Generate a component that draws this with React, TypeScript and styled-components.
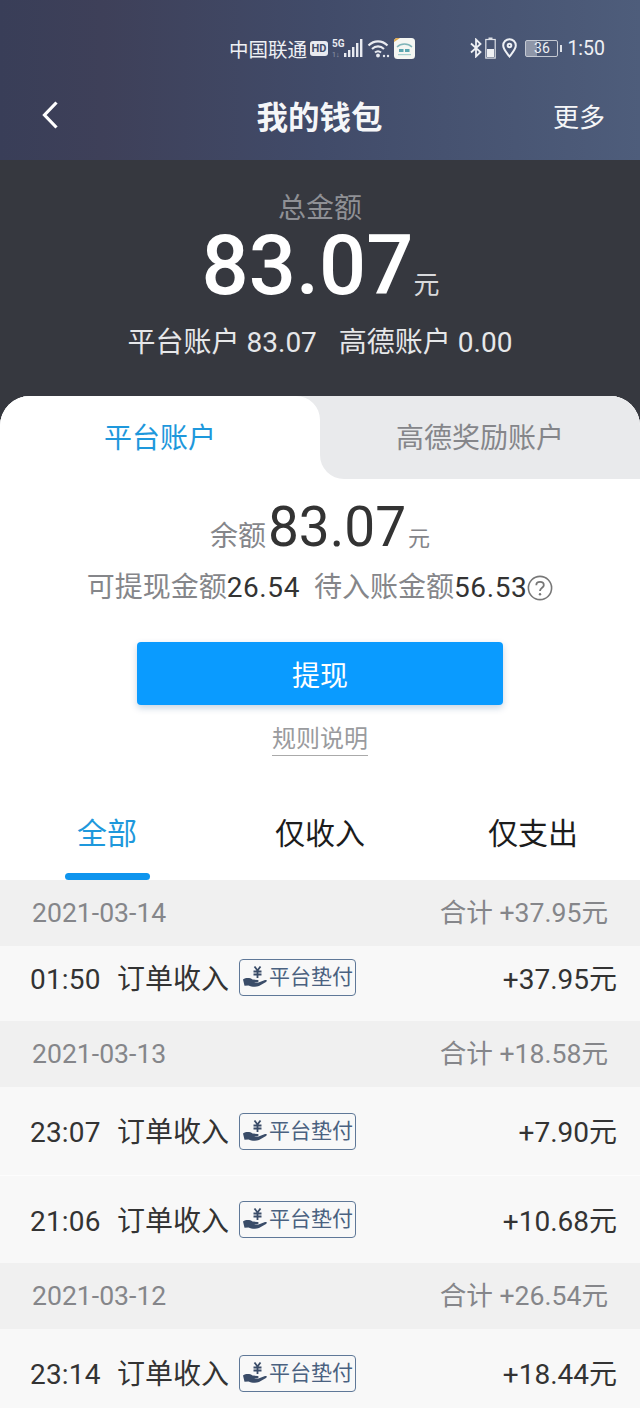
import React from "react";
import styled, { createGlobalStyle } from "styled-components";

const GlobalStyle = createGlobalStyle`
  html, body {
    margin: 0;
    padding: 0;
    background: #f8f8f8;
  }
  body {
    font-family: Roboto, "Noto Sans CJK SC", sans-serif;
  }
`;

const Page = styled.div`
  width: 640px;
  height: 1408px;
  overflow: hidden;
  display: flex;
  flex-direction: column;
`;

const Header = styled.header`
  height: 160px;
  flex-shrink: 0;
  box-sizing: border-box;
  background: linear-gradient(90deg, #393e58 0%, #3e4059 16%, #414b69 50%, #4e5d7b 100%);
  display: flex;
  flex-direction: column;
  color: #fff;
`;

const StatusBar = styled.div`
  height: 36px;
  margin-top: 30px;
  box-sizing: border-box;
  padding: 0 35px 0 229px;
  display: flex;
  align-items: center;
  justify-content: space-between;
  font-size: 19.5px;
  color: #eef0f4;
`;

const StatusGroup = styled.div`
  display: flex;
  align-items: center;
  gap: 3px;
`;

const HdBadge = styled.span`
  width: 18px;
  height: 15px;
  border-radius: 3px;
  background: #e8eaf0;
  color: #414c66;
  font-size: 11px;
  font-weight: 700;
  line-height: 15px;
  text-align: center;
`;

const BatteryBox = styled.span`
  width: 31px;
  height: 15px;
  margin-left: 5px;
  border: 1px solid #c4c9d3;
  border-radius: 2px;
  background: linear-gradient(90deg, #8e96a8 36%, transparent 36%);
  font-size: 14px;
  line-height: 15px;
  text-align: center;
  position: relative;

  &::after {
    content: "";
    position: absolute;
    right: -5px;
    top: 4px;
    width: 2px;
    height: 7px;
    background: #dfe2e8;
  }
`;

const Clock = styled.span`
  margin-left: 6px;
  font-size: 19.5px;
`;

const NavBar = styled.div`
  flex: 1;
  padding: 4px 35px 0 41px;
  display: flex;
  align-items: center;
  justify-content: space-between;
`;

const NavTitle = styled.h1`
  margin: 0 0 0 -5px;
  font-size: 31.5px;
  font-weight: 700;
  color: #f5f6f8;
`;

const NavAction = styled.span`
  font-size: 26px;
  color: #f5f6f8;
`;

const BackSlot = styled.span`
  width: 50px;
  display: flex;
`;

const Summary = styled.section`
  height: 266px;
  flex-shrink: 0;
  background: #36383f;
  display: flex;
  flex-direction: column;
  align-items: center;
  box-sizing: border-box;
  padding-top: 31px;
  color: #fff;
`;

const SummaryLabel = styled.div`
  font-size: 28px;
  line-height: 36px;
  color: #8f9095;
`;

const SummaryAmount = styled.div`
  display: flex;
  align-items: baseline;
  height: 68px;
  line-height: 68px;
  margin-top: 5px;
  padding-left: 1px;
`;

const SummaryValue = styled.span`
  font-size: 83px;
  font-weight: 500;
`;

const SummaryUnit = styled.span`
  font-size: 26px;
  color: #d8d9dc;
`;

const SummaryAccounts = styled.div`
  margin-top: 25px;
  display: flex;
  gap: 22px;
  font-size: 28px;
  line-height: 36px;
  color: #e6e7e9;
`;

const Sheet = styled.section`
  flex-shrink: 0;
  background: #fff;
  border-radius: 30px 30px 0 0;
  margin-top: -30px;
  overflow: hidden;
`;

const TabRow = styled.div`
  display: grid;
  grid-template-columns: 1fr 1fr;
  height: 83px;
`;

const TabCell = styled.div<{ $behind: string }>`
  background: ${({ $behind }) => $behind};
`;

const TabFace = styled.div<{ $active?: boolean }>`
  height: 100%;
  background: ${({ $active }) => ($active ? "#fff" : "#e9eaec")};
  color: ${({ $active }) => ($active ? "#1e98dc" : "#85868a")};
  border-radius: ${({ $active }) => ($active ? "0 24px 0 0" : "0 0 0 24px")};
  font-size: 28px;
  display: flex;
  justify-content: center;
  padding-top: 24px;
  box-sizing: border-box;
  line-height: 38px;
`;

const Balance = styled.div`
  display: flex;
  flex-direction: column;
  align-items: center;
  height: 316px;
  padding-top: 16px;
  box-sizing: border-box;
`;

const BalanceLine = styled.div`
  display: flex;
  align-items: baseline;
  height: 64px;
  line-height: 64px;
  color: #85868a;
  font-size: 28px;
`;

const BalanceValue = styled.span`
  font-size: 55px;
  color: #333;
  margin-left: 2px;
`;

const BalanceUnit = styled.span`
  font-size: 22px;
  margin-left: 2px;
`;

const Available = styled.div`
  margin-top: 10px;
  display: flex;
  align-items: center;
  font-size: 28px;
  line-height: 38px;
  color: #85868a;
`;

const Figure = styled.span<{ $gap?: boolean }>`
  color: #333;
  letter-spacing: 0.6px;
  margin-right: ${({ $gap }) => ($gap ? "14px" : "0")};
`;

const WithdrawButton = styled.button`
  margin-top: 35px;
  width: 366px;
  height: 63px;
  border: none;
  border-radius: 4px;
  background: #0a9bff;
  color: #fff;
  font: inherit;
  font-size: 28px;
  box-shadow: 0 3px 7px rgba(0, 60, 120, 0.22);
`;

const RulesLink = styled.a`
  margin-top: 20px;
  font-size: 24px;
  line-height: 28px;
  padding-bottom: 2px;
  color: #9a9b9e;
  border-bottom: 1px solid #aaa;
`;

const FilterRow = styled.nav`
  height: 85px;
  display: grid;
  grid-template-columns: 214px 212px 214px;
  background: #fff;
`;

const Filter = styled.div<{ $active?: boolean }>`
  position: relative;
  text-align: center;
  font-size: 30px;
  line-height: 40px;
  padding-top: 19px;
  color: ${({ $active }) => ($active ? "#1e98dc" : "#1c1c1c")};

  ${({ $active }) =>
    $active &&
    `&::after {
      content: "";
      position: absolute;
      left: 65px;
      bottom: 0;
      width: 85px;
      height: 7px;
      border-radius: 4px;
      background: #0f95ee;
    }`}
`;

const GroupHeader = styled.div`
  height: 66px;
  box-sizing: border-box;
  padding: 17px 32px 0;
  display: flex;
  align-items: baseline;
  justify-content: space-between;
  background: #f0f0f0;
  color: #85868a;
  font-size: 26.6px;
  line-height: 32px;
`;

const Row = styled.div<{ $height: number; $first?: boolean }>`
  height: ${({ $height }) => $height}px;
  box-sizing: border-box;
  padding: 4px 23px ${({ $first }) => ($first ? "12px" : "0")} 30px;
  display: flex;
  align-items: baseline;
  align-content: center;
  flex-wrap: wrap;
  background: #f8f8f8;
  color: #333;
  font-size: 28px;
  line-height: 36px;

  & + & {
    border-top: 1px solid #fdfdfd;
  }
`;

const RowTime = styled.span`
  width: 87px;
  letter-spacing: 0.2px;
`;

const RowTitle = styled.span`
  width: 122px;
`;

const Tag = styled.span`
  width: 117px;
  height: 37px;
  margin-top: -4px;
  box-sizing: border-box;
  border: 1px solid #5f7898;
  border-radius: 4px;
  display: flex;
  align-items: center;
  gap: 1px;
  padding-left: 2px;
  color: #4a6180;
  font-size: 21px;
  line-height: 35px;
  white-space: nowrap;
  align-self: center;
`;

const RowAmount = styled.span`
  margin-left: auto;
`;

const BackIcon = () => (
  <svg width="18" height="30" viewBox="0 0 18 30" fill="none">
    <path d="M15.5 2.5 L3.5 15 L15.5 27.5" stroke="#fff" strokeWidth="3.2" />
  </svg>
);

const SignalIcon = () => (
  <svg width="33" height="20" viewBox="0 0 33 20" fill="#e8eaf0">
    <text x="1" y="9" fontSize="10" fontWeight="700" fontFamily="Roboto">5G</text>
    <text x="1" y="19" fontSize="7" opacity="0.45" fontFamily="Roboto">1↓</text>
    <rect x="13" y="15" width="2.4" height="4" />
    <rect x="17" y="12" width="2.4" height="7" />
    <rect x="21" y="9" width="2.4" height="10" />
    <rect x="25" y="5" width="2.4" height="14" />
    <rect x="29" y="1" width="2.4" height="18" />
  </svg>
);

const WifiIcon = () => (
  <svg width="24" height="20" viewBox="0 0 24 20" fill="none" stroke="#e8eaf0" strokeWidth="2.1">
    <path d="M1.5 7.5 C7 2 15 2 20.5 7.5" />
    <path d="M5 11 C8.5 7.5 13.5 7.5 17 11" />
    <path d="M8 14.5 C10 12.8 12 12.8 14 14.5" />
    <circle cx="11" cy="17.5" r="1.9" fill="#e8eaf0" stroke="none" />
    <circle cx="17" cy="18" r="1.2" fill="#e8eaf0" stroke="none" />
    <circle cx="21" cy="18" r="1.2" fill="#e8eaf0" stroke="none" />
  </svg>
);

const AppIcon = () => (
  <svg width="21" height="21" viewBox="0 0 21 21">
    <rect width="21" height="21" rx="3.5" fill="#f4f6f2" />
    <path d="M0 4 V3.5 A3.5 3.5 0 0 1 3.5 0 H6 Z" fill="#e0a84a" />
    <path d="M3 9 C7 5 14 5 18 9" fill="none" stroke="#7fb4b8" strokeWidth="1.4" />
    <rect x="5" y="11" width="4.5" height="3" fill="#5aa6b0" />
    <rect x="11" y="11" width="4.5" height="3" fill="#5aa6b0" />
    <rect x="4" y="16" width="13" height="1.2" fill="#a6d0cf" />
  </svg>
);

const BluetoothIcon = () => (
  <svg width="12" height="20" viewBox="0 0 12 20" fill="none" stroke="#eef0f4" strokeWidth="1.8">
    <path d="M1 5.5 L10.5 14 L6 18.5 V1.5 L10.5 6 L1 14.5" />
  </svg>
);

const PhoneBatteryIcon = () => (
  <svg width="11" height="22" viewBox="0 0 11 22" fill="none">
    <rect x="3.5" y="0.5" width="4" height="2" fill="#dfe2e8" />
    <rect x="0.8" y="2.5" width="9.4" height="18.6" stroke="#dfe2e8" strokeWidth="1.2" />
    <rect x="2" y="12" width="7" height="8" fill="#eef0f4" />
  </svg>
);

const PinSvg = styled.svg`
  margin-left: 3px;
`;

const PinIcon = () => (
  <PinSvg width="15" height="20" viewBox="0 0 15 20" fill="none" stroke="#eef0f4" strokeWidth="2">
    <path d="M7.5 18.5 C4 14 1.2 11 1.2 7.5 A6.3 6.3 0 0 1 13.8 7.5 C13.8 11 11 14 7.5 18.5 Z" />
    <circle cx="7.5" cy="7.5" r="1.8" />
  </PinSvg>
);

const HelpIcon = () => (
  <svg width="26" height="26" viewBox="0 0 26 26" fill="none" stroke="#777">
    <circle cx="13" cy="13" r="11.6" strokeWidth="1.6" />
    <path d="M9.3 10.2 C9.3 5.8 16.8 5.8 16.8 10.2 C16.8 12.8 13 12.8 13 16" strokeWidth="1.8" />
    <circle cx="13" cy="19.2" r="1.2" fill="#777" stroke="none" />
  </svg>
);

const HandCoinIcon = () => (
  <svg width="26" height="25" viewBox="0 0 26 25" fill="#3a4c68">
    <path d="M1 14.5 C4 12.5 8 12.8 10.5 14.5 L15.5 15 C17 15.2 17 16.8 15.5 17 L11.5 17.4 L16.5 17.6 L23 15 C24.8 14.6 25.6 16 24 17 L17 21 C13 22.6 9 21.4 6.5 20.4 L2.5 20.8 Z" />
    <path d="M12.5 1.5 L15.5 5.5 L18.5 1.5 M11.5 6.5 H19.5 M11.5 9.5 H19.5 M15.5 5.5 V13" fill="none" stroke="#3a4c68" strokeWidth="1.8" />
  </svg>
);

type Entry = { time: string; amount: string; height: number; first?: boolean };
type Group = { date: string; total: string; entries: Entry[] };

const groups: Group[] = [
  {
    date: "2021-03-14",
    total: "合计 +37.95元",
    entries: [{ time: "01:50", amount: "+37.95元", height: 75, first: true }],
  },
  {
    date: "2021-03-13",
    total: "合计 +18.58元",
    entries: [
      { time: "23:07", amount: "+7.90元", height: 88 },
      { time: "21:06", amount: "+10.68元", height: 88 },
    ],
  },
  {
    date: "2021-03-12",
    total: "合计 +26.54元",
    entries: [{ time: "23:14", amount: "+18.44元", height: 88 }],
  },
];

export default function App() {
  return (
    <Page>
      <GlobalStyle />
      <Header>
        <StatusBar>
          <StatusGroup>
            <span>中国联通</span>
            <HdBadge>HD</HdBadge>
            <SignalIcon />
            <WifiIcon />
            <AppIcon />
          </StatusGroup>
          <StatusGroup>
            <BluetoothIcon />
            <PhoneBatteryIcon />
            <PinIcon />
            <BatteryBox>36</BatteryBox>
            <Clock>1:50</Clock>
          </StatusGroup>
        </StatusBar>
        <NavBar>
          <BackSlot>
            <BackIcon />
          </BackSlot>
          <NavTitle>我的钱包</NavTitle>
          <NavAction>更多</NavAction>
        </NavBar>
      </Header>

      <Summary>
        <SummaryLabel>总金额</SummaryLabel>
        <SummaryAmount>
          <SummaryValue>83.07</SummaryValue>
          <SummaryUnit>元</SummaryUnit>
        </SummaryAmount>
        <SummaryAccounts>
          <span>平台账户 83.07</span>
          <span>高德账户 0.00</span>
        </SummaryAccounts>
      </Summary>

      <Sheet>
        <TabRow>
          <TabCell $behind="#e9eaec">
            <TabFace $active>平台账户</TabFace>
          </TabCell>
          <TabCell $behind="#fff">
            <TabFace>高德奖励账户</TabFace>
          </TabCell>
        </TabRow>

        <Balance>
          <BalanceLine>
            余额
            <BalanceValue>83.07</BalanceValue>
            <BalanceUnit>元</BalanceUnit>
          </BalanceLine>
          <Available>
            可提现金额<Figure $gap>26.54</Figure>
            待入账金额<Figure>56.53</Figure>
            <HelpIcon />
          </Available>
          <WithdrawButton>提现</WithdrawButton>
          <RulesLink>规则说明</RulesLink>
        </Balance>

        <FilterRow>
          <Filter $active>全部</Filter>
          <Filter>仅收入</Filter>
          <Filter>仅支出</Filter>
        </FilterRow>

        {groups.map((group) => (
          <React.Fragment key={group.date}>
            <GroupHeader>
              <span>{group.date}</span>
              <span>{group.total}</span>
            </GroupHeader>
            {group.entries.map((entry) => (
              <Row key={entry.time} $height={entry.height} $first={entry.first}>
                <RowTime>{entry.time}</RowTime>
                <RowTitle>订单收入</RowTitle>
                <Tag>
                  <HandCoinIcon />
                  平台垫付
                </Tag>
                <RowAmount>{entry.amount}</RowAmount>
              </Row>
            ))}
          </React.Fragment>
        ))}
      </Sheet>
    </Page>
  );
}
